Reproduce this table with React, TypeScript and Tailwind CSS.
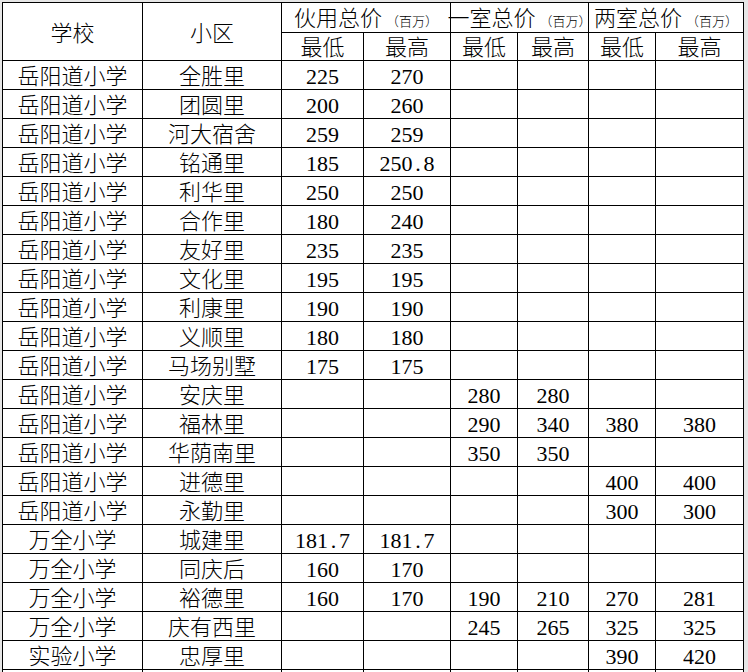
const rows: string[][] = [
  ["岳阳道小学", "全胜里", "225", "270", "", "", "", ""],
  ["岳阳道小学", "团圆里", "200", "260", "", "", "", ""],
  ["岳阳道小学", "河大宿舍", "259", "259", "", "", "", ""],
  ["岳阳道小学", "铭通里", "185", "250.8", "", "", "", ""],
  ["岳阳道小学", "利华里", "250", "250", "", "", "", ""],
  ["岳阳道小学", "合作里", "180", "240", "", "", "", ""],
  ["岳阳道小学", "友好里", "235", "235", "", "", "", ""],
  ["岳阳道小学", "文化里", "195", "195", "", "", "", ""],
  ["岳阳道小学", "利康里", "190", "190", "", "", "", ""],
  ["岳阳道小学", "义顺里", "180", "180", "", "", "", ""],
  ["岳阳道小学", "马场别墅", "175", "175", "", "", "", ""],
  ["岳阳道小学", "安庆里", "", "", "280", "280", "", ""],
  ["岳阳道小学", "福林里", "", "", "290", "340", "380", "380"],
  ["岳阳道小学", "华荫南里", "", "", "350", "350", "", ""],
  ["岳阳道小学", "进德里", "", "", "", "", "400", "400"],
  ["岳阳道小学", "永勤里", "", "", "", "", "300", "300"],
  ["万全小学", "城建里", "181.7", "181.7", "", "", "", ""],
  ["万全小学", "同庆后", "160", "170", "", "", "", ""],
  ["万全小学", "裕德里", "160", "170", "190", "210", "270", "281"],
  ["万全小学", "庆有西里", "", "", "245", "265", "325", "325"],
  ["实验小学", "忠厚里", "", "", "", "", "390", "420"],
  ["", "", "", "", "", "", "", ""],
];

const groups = ["伙用总价", "一室总价", "两室总价"];

// SimSun-style numbers: the dot takes a full half-width cell
const Num = ({ value }: { value: string }) => {
  const parts = value.split(".");
  if (parts.length === 1) return <>{value}</>;
  return (
    <>
      {parts[0]}
      <span className="inline-block w-[11px] text-center">.</span>
      {parts[1]}
    </>
  );
};

const Cell = ({ children, className = "" }: { children?: React.ReactNode; className?: string }) => (
  <div className={`bg-white flex items-center justify-center whitespace-nowrap leading-none text-[22px] ${className}`}>
    {children}
  </div>
);

export default function App() {
  return (
    <div
      className="w-[748px] h-[672px] overflow-hidden bg-[#e6e6e6] pt-[2px] pl-[2px] text-black font-light"
      style={{ fontFamily: '"Liberation Serif", "Noto Sans CJK SC", serif' }}
    >
      <div className="grid w-max grid-cols-[139px_138px_81px_86px_66px_70px_66px_87px] grid-rows-[29px_27px] auto-rows-[28px] gap-px bg-black p-px">
        <Cell className="row-span-2 pt-[4px]">学校</Cell>
        <Cell className="row-span-2 pt-[4px]">小区</Cell>
        {groups.map((g) => (
          <Cell key={g} className="col-span-2">
            <span className="flex items-baseline pt-[3px]">
              <span>{g}</span>
              <span className="text-[13px] flex items-baseline ml-[4px]">
                <span className="inline-block w-[13px] text-right">（</span>
                百万
                <span className="inline-block w-[13px] text-left">）</span>
              </span>
            </span>
          </Cell>
        ))}
        {groups.map((g) => [
          <Cell key={g + "-lo"} className="pt-[2px]">最低</Cell>,
          <Cell key={g + "-hi"} className="pt-[2px]">最高</Cell>,
        ])}
        {rows.map((r, i) =>
          r.map((v, j) => (
            <Cell key={`${i}-${j}`} className="pt-[3px]">
              {j < 2 ? v : <Num value={v} />}
            </Cell>
          ))
        )}
      </div>
    </div>
  );
}
